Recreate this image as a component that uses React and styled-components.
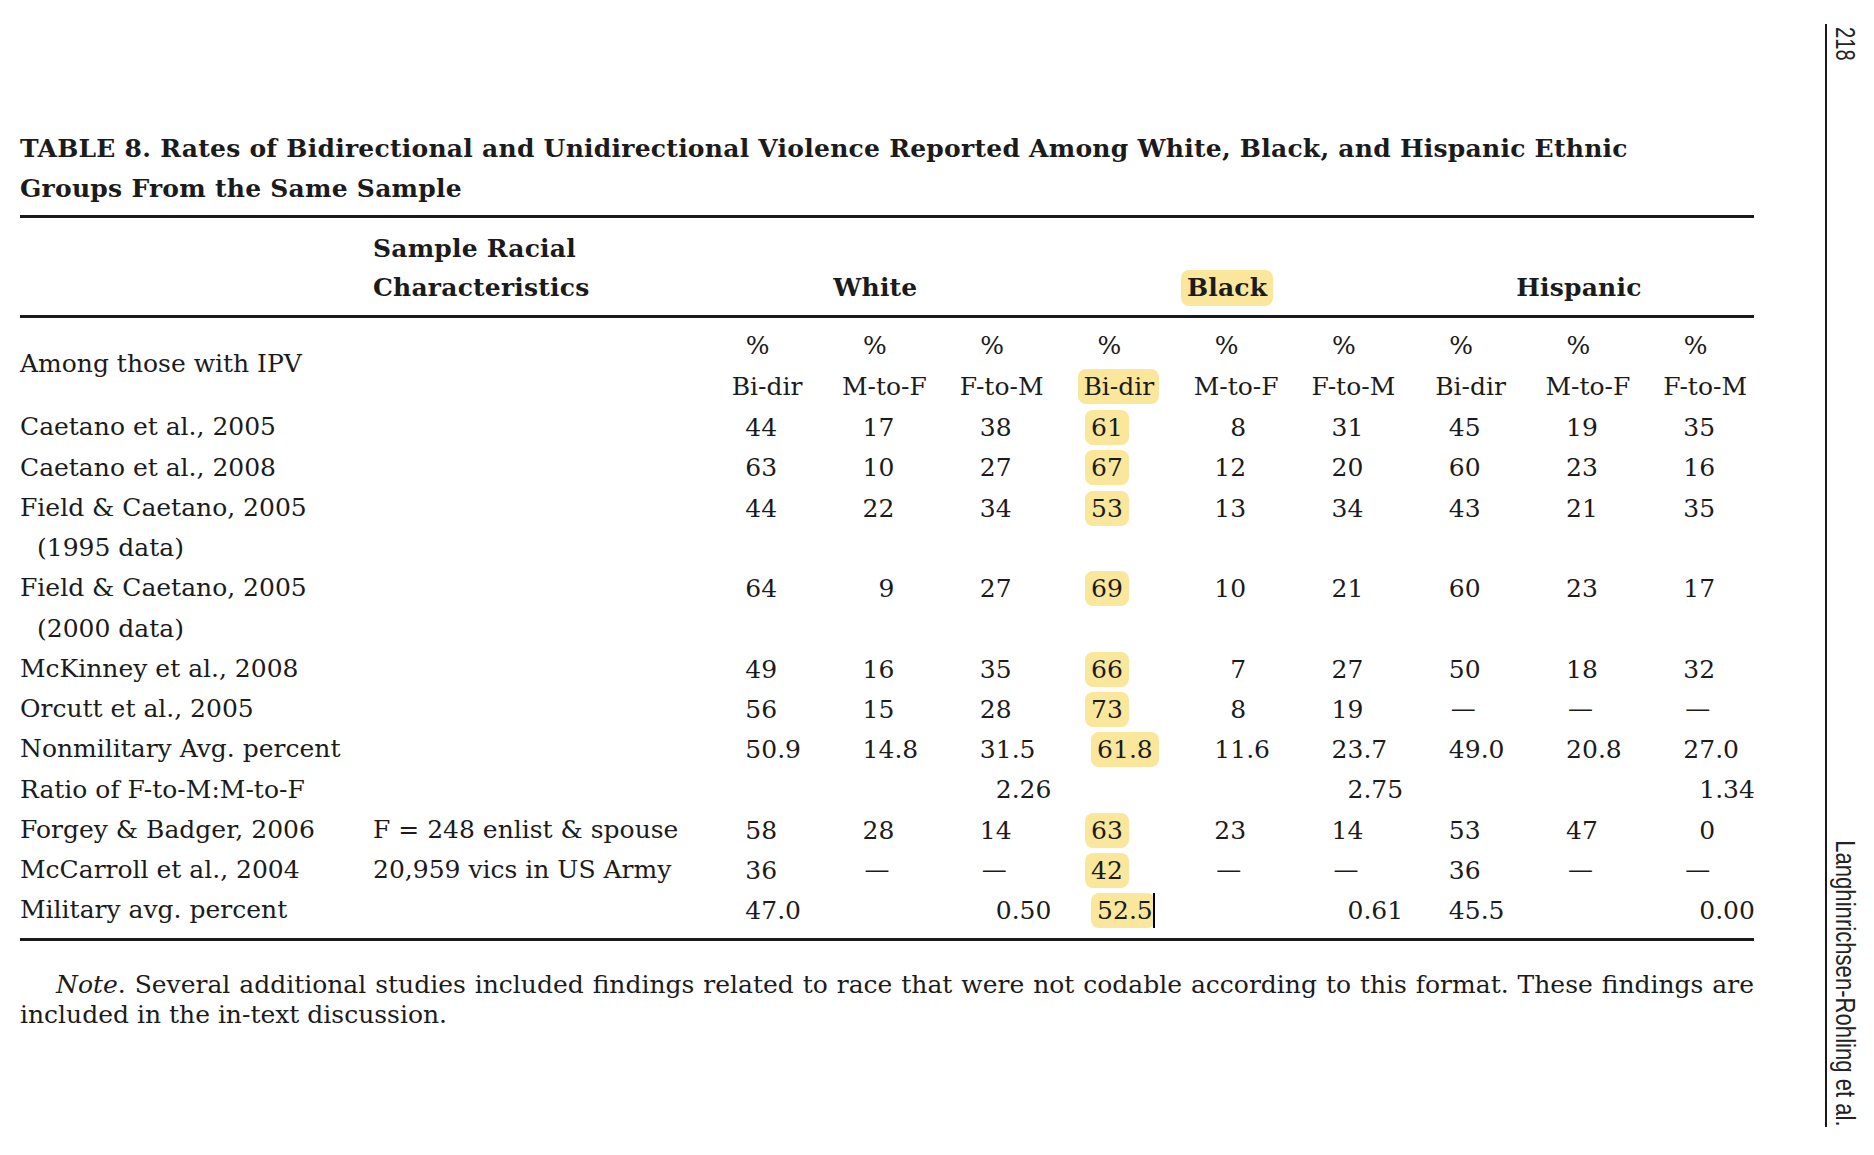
import React from 'react';
import styled, { createGlobalStyle } from 'styled-components';

const GlobalStyle = createGlobalStyle`
  html, body {
    margin: 0;
    padding: 0;
    background: #ffffff;
  }
  body {
    font-family: "DejaVu Serif", "Liberation Serif", serif;
    color: #1b1b1b;
  }
`;

// label | sample | 9 value columns
const cols = '353px 335.5px repeat(9, 117.25px)';
const ink = '#1a1a1a';
const marker = '#fbe79c';

const Page = styled.div`
  display: flex;
  align-items: flex-start;
  width: 1874px;
  height: 1155px;
  overflow: hidden;
`;

const Main = styled.main`
  width: 1734px;
  margin-left: 20px;
  padding-top: 129px;
  flex: none;
`;

const Title = styled.div`
  font-size: 25px;
  line-height: 40px;
  font-weight: 700;
  letter-spacing: 0.25px;
`;

const Rule = styled.div`
  height: 3px;
  background: ${ink};
  margin-top: ${p => p.$gap || 0}px;
`;

const HeadGrid = styled.div`
  display: grid;
  grid-template-columns: ${cols};
  padding: 10.5px 0 7px;
  font-size: 25px;
  line-height: 39.5px;
  font-weight: 700;
  letter-spacing: 0.2px;
`;

const SampleHead = styled.div`
  grid-column: 2;
`;

const GroupHead = styled.div`
  grid-column: span 3;
  align-self: end;
  text-align: center;
  padding-right: 18px;
`;

const Mark = styled.span`
  display: inline-block;
  background: ${p => (p.$on ? marker : 'transparent')};
  border-radius: ${p => (p.$on ? '8px' : '0')};
  padding: 0 ${p => (p.$on ? p.$pad : 0)}px;
  line-height: ${p => p.$h}px;
  margin-top: ${p => p.$drop || 0}px;
`;

const SubGrid = styled.div`
  display: grid;
  grid-template-columns: ${cols};
  padding-top: 8px;
  font-size: 25px;
  line-height: 40.25px;
`;

const SubLabel = styled.div`
  grid-column: 1 / span 2;
  align-self: center;
`;

const ColHead = styled.div`
  display: flex;
  flex-direction: column;
  align-items: center;
  white-space: nowrap;
`;

const Pct = styled.span`
  padding-right: 19px;
`;

const BodyGrid = styled.div`
  display: grid;
  grid-template-columns: ${cols};
  padding: 3.8px 0 7.2px;
  font-size: 25px;
  line-height: 40.25px;
`;

const Label = styled.div`
  grid-column: 1;
  white-space: nowrap;
`;

const LabelNote = styled.span`
  display: block;
  padding-left: 17px;
`;

const Sample = styled.div`
  grid-column: 2;
  white-space: nowrap;
`;

const Cell = styled.div`
  display: flex;
  align-items: center;
  height: 40.25px;
  white-space: nowrap;
`;

const IntBox = styled.div`
  flex: none;
  width: calc(50% + 10px);
  display: flex;
  justify-content: flex-end;
`;

const FracBox = styled.div`
  flex: 1;
  display: flex;
`;

const Piece = styled.span`
  position: relative;
  display: inline-block;
  height: 35px;
  line-height: 35px;
  background: ${p => (p.$on ? marker : 'transparent')};
  padding-left: ${p => (p.$on && p.$left ? 6 : 0)}px;
  padding-right: ${p => (p.$on && p.$right ? p.$rpad : 0)}px;
  border-radius: ${p =>
    !p.$on ? '0' : `${p.$left ? 8 : 0}px ${p.$right ? 8 : 0}px ${p.$right ? 8 : 0}px ${p.$left ? 8 : 0}px`};

  /* text caret left in the source document */
  &::after {
    content: '';
    display: ${p => (p.$cursor ? 'block' : 'none')};
    position: absolute;
    right: 0;
    top: 0;
    bottom: 0;
    width: 1.5px;
    background: #000;
  }
`;

const Dash = styled.span`
  margin-right: 5px;
`;

const Note = styled.div`
  margin-top: 29px;
  font-size: 25px;
  line-height: 30.5px;
`;

const NoteFirst = styled.span`
  display: block;
  text-indent: 36px;
  text-align: justify;
  text-align-last: justify;
  white-space: nowrap;
`;

const NoteRest = styled.span`
  display: block;
`;

const Aside = styled.aside`
  flex: none;
  margin-left: 71px;
  margin-top: 24px;
  height: 1103px;
  border-left: 2px solid ${ink};
  padding-left: 5px;
  display: flex;
  flex-direction: column;
  justify-content: space-between;
  align-items: flex-start;
`;

const Running = styled.div`
  writing-mode: vertical-rl;
  font-family: "Liberation Sans", Arial, sans-serif;
  font-size: 28px;
  line-height: 26px;
  color: #222;
  white-space: nowrap;
  transform: scaleY(${p => p.$squeeze});
  transform-origin: ${p => (p.$bottom ? 'bottom' : 'top')};
  margin-top: ${p => (p.$bottom ? 0 : 3)}px;
`;

const columns = [
  ['Bi-dir', false], ['M-to-F', false], ['F-to-M', false],
  ['Bi-dir', true], ['M-to-F', false], ['F-to-M', false],
  ['Bi-dir', false], ['M-to-F', false], ['F-to-M', false],
];

const rows = [
  { label: 'Caetano et al., 2005', v: ['44', '17', '38', '61', '8', '31', '45', '19', '35'] },
  { label: 'Caetano et al., 2008', v: ['63', '10', '27', '67', '12', '20', '60', '23', '16'] },
  { label: 'Field & Caetano, 2005', sub: '(1995 data)', v: ['44', '22', '34', '53', '13', '34', '43', '21', '35'] },
  { label: 'Field & Caetano, 2005', sub: '(2000 data)', v: ['64', '9', '27', '69', '10', '21', '60', '23', '17'] },
  { label: 'McKinney et al., 2008', v: ['49', '16', '35', '66', '7', '27', '50', '18', '32'] },
  { label: 'Orcutt et al., 2005', v: ['56', '15', '28', '73', '8', '19', '—', '—', '—'] },
  { label: 'Nonmilitary Avg. percent', v: ['50.9', '14.8', '31.5', '61.8', '11.6', '23.7', '49.0', '20.8', '27.0'] },
  { label: 'Ratio of F-to-M:M-to-F', v: ['', '', '2.26', '', '', '2.75', '', '', '1.34'] },
  { label: 'Forgey & Badger, 2006', sample: 'F = 248 enlist & spouse', v: ['58', '28', '14', '63', '23', '14', '53', '47', '0'] },
  { label: 'McCarroll et al., 2004', sample: '20,959 vics in US Army', v: ['36', '—', '—', '42', '—', '—', '36', '—', '—'] },
  { label: 'Military avg. percent', v: ['47.0', '', '0.50', '52.5', '', '0.61', '45.5', '', '0.00'], cursor: 3 },
];

const Value = ({ value, hl, cursor }) => {
  if (!value) return <Cell />;
  if (value === '—') {
    return (
      <Cell>
        <IntBox><Dash>—</Dash></IntBox>
      </Cell>
    );
  }
  const dot = value.indexOf('.');
  const int = dot < 0 ? value : value.slice(0, dot);
  const frac = dot < 0 ? '' : value.slice(dot);
  return (
    <Cell>
      <IntBox>
        <Piece $on={hl} $left $right={!frac} $rpad={6} $cursor={cursor && !frac}>{int}</Piece>
      </IntBox>
      <FracBox>
        {frac && (
          <Piece $on={hl} $right $rpad={cursor ? 2 : 6} $cursor={cursor}>{frac}</Piece>
        )}
      </FracBox>
    </Cell>
  );
};

const App = () => (
  <>
    <GlobalStyle />
    <Page>
      <Main>
        <Title>
          TABLE 8. Rates of Bidirectional and Unidirectional Violence Reported Among White, Black, and Hispanic Ethnic
          <br />
          Groups From the Same Sample
        </Title>
        <Rule $gap={6} />

        <HeadGrid>
          <SampleHead>Sample Racial<br />Characteristics</SampleHead>
          <GroupHead>White</GroupHead>
          <GroupHead><Mark $on $pad={6} $h={36}>Black</Mark></GroupHead>
          <GroupHead>Hispanic</GroupHead>
        </HeadGrid>
        <Rule />

        <SubGrid>
          <SubLabel>Among those with IPV</SubLabel>
          {columns.map(([name, hl], i) => (
            <ColHead key={i}>
              <Pct>%</Pct>
              <Mark $on={hl} $pad={5} $h={35} $drop={2.9}>{name}</Mark>
            </ColHead>
          ))}
        </SubGrid>

        <BodyGrid>
          {rows.map((r, ri) => (
            <React.Fragment key={ri}>
              <Label>
                {r.label}
                {r.sub && <LabelNote>{r.sub}</LabelNote>}
              </Label>
              <Sample>{r.sample || ''}</Sample>
              {r.v.map((v, ci) => (
                <Value key={ci} value={v} hl={ci === 3} cursor={r.cursor === ci} />
              ))}
            </React.Fragment>
          ))}
        </BodyGrid>
        <Rule />

        <Note>
          <NoteFirst>
            <i>Note</i>. Several additional studies included findings related to race that were not codable according to this format. These findings are
          </NoteFirst>
          <NoteRest>included in the in-text discussion.</NoteRest>
        </Note>
      </Main>

      <Aside>
        <Running $squeeze={0.72}>218</Running>
        <Running $squeeze={0.79} $bottom>Langhinrichsen-Rohling et al.</Running>
      </Aside>
    </Page>
  </>
);

export default App;
